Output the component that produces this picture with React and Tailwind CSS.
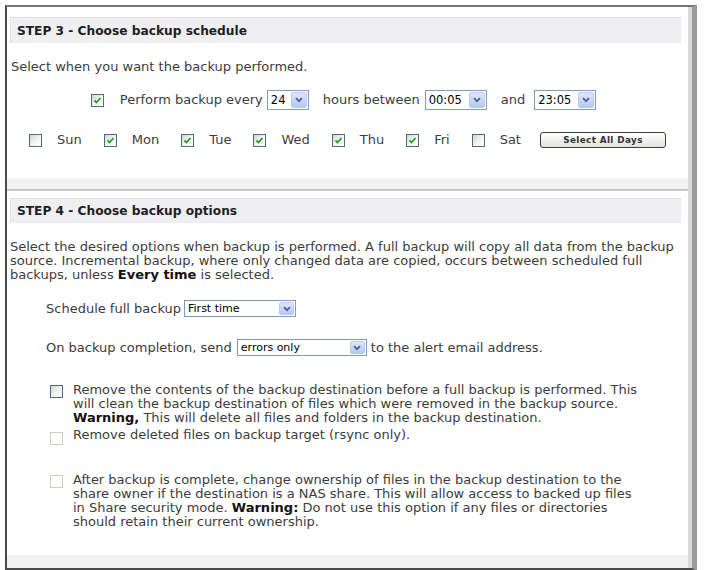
import React from 'react'

function Check({ checked, disabled }) {
  if (disabled) {
    return <span className="block w-[13px] h-[13px] flex-shrink-0 border border-[#cfcdc4] bg-white" />
  }
  return (
    <span className="flex w-[13px] h-[13px] flex-shrink-0 items-center justify-center border border-[#4e6a8a] bg-gradient-to-br from-[#d6d6d0] via-[#f2f2ee] to-white">
      {checked && (
        <svg width="9" height="9" viewBox="0 0 9 9">
          <path d="M1.5 4.5 L3.5 6.5 L7.5 2" fill="none" stroke="#21a121" strokeWidth="1.8" />
        </svg>
      )}
    </span>
  )
}

function Select({ value, width, big }) {
  return (
    <span className={`flex items-stretch border border-[#7f9db9] bg-white ${width} ${big ? 'h-[20px]' : 'h-[17px]'}`}>
      <span className={`flex-1 flex items-center pl-[3px] text-black ${big ? 'text-[11.5px]' : 'text-[11px]'}`}>
        {value}
      </span>
      <span className={`m-px flex items-center justify-center rounded-[2px] border border-[#b9cbf5] bg-gradient-to-b from-[#dde7fe] to-[#b4c8f6] ${big ? 'w-[16px]' : 'w-[15px]'}`}>
        <svg width="8" height="6" viewBox="0 0 8 6">
          <path d="M1 1.2 L4 4.2 L7 1.2" fill="none" stroke="#4d6185" strokeWidth="1.8" />
        </svg>
      </span>
    </span>
  )
}

export default function App() {
  const days = [
    { d: 'Sun', on: false },
    { d: 'Mon', on: true },
    { d: 'Tue', on: true },
    { d: 'Wed', on: true },
    { d: 'Thu', on: true },
    { d: 'Fri', on: true },
    { d: 'Sat', on: false },
  ]

  return (
    <div className="w-[704px] h-[570px] bg-white pt-[5px] pl-[5px] font-['DejaVu_Sans',Verdana,sans-serif] text-[13px] leading-[14px] text-[#3c3c3c]">
      <div className="w-[692px] border-l-2 border-t-2 border-b-[3px] border-r-[5px] border-l-[#4a4a4a] border-t-[#777] border-b-[#4a4a4a] border-r-[#9c9c9c]">
        <div className="flex flex-col border-r-4 border-r-[#dadada]">

          {/* STEP 3 */}
          <div className="ml-[3px] mr-[7px] mt-[10px] h-[26px] flex items-center pl-[6px] bg-[#efeff2] border-t border-l border-[#e2e2e6] font-bold text-[12.2px] text-[#1e1e1e]">
            STEP 3 - Choose backup schedule
          </div>
          <div className="mt-[17px] pl-[4px]">Select when you want the backup performed.</div>

          <div className="mt-[16px] h-[20px] pr-[8px] flex items-center justify-center">
            <Check checked />
            <span className="ml-[16px]">Perform backup every</span>
            <span className="ml-[4px]"><Select value="24" width="w-[42px]" big /></span>
            <span className="ml-[14px]">hours between</span>
            <span className="ml-[5px]"><Select value="00:05" width="w-[62px]" big /></span>
            <span className="ml-[14px]">and</span>
            <span className="ml-[9px]"><Select value="23:05" width="w-[62px]" big /></span>
          </div>

          <div className="mt-[22px] h-[16px] flex items-center justify-center gap-[22px]">
            {days.map(x => (
              <span key={x.d} className="flex items-center">
                <Check checked={x.on} />
                <span className="ml-[15px]">{x.d}</span>
              </span>
            ))}
            <button className="ml-[-3px] w-[126px] h-[16px] rounded-[3px] border border-[#3c3c3c] bg-gradient-to-b from-white to-[#e2e2dc] text-[8.8px] font-bold tracking-[0.4px] text-[#333] leading-none">
              Select All Days
            </button>
          </div>

          <div className="mt-[30px] h-[11px] bg-[#f2f2f2]" />
          <div className="h-[2px] bg-[#c6c6c6]" />

          {/* STEP 4 */}
          <div className="ml-[3px] mr-[7px] mt-[7px] h-[25px] flex items-center pl-[6px] bg-[#efeff2] border-t border-l border-[#e2e2e6] font-bold text-[12.2px] text-[#1e1e1e]">
            STEP 4 - Choose backup options
          </div>
          <div className="mt-[17px] pl-[3px] whitespace-nowrap">
            <div>Select the desired options when backup is performed. A full backup will copy all data from the backup</div>
            <div>source. Incremental backup, where only changed data are copied, occurs between scheduled full</div>
            <div>backups, unless <b className="text-[#111]">Every time</b> is selected.</div>
          </div>

          <div className="mt-[18px] h-[17px] pl-[39px] flex items-center">
            <span>Schedule full backup</span>
            <span className="ml-[3px]"><Select value="First time" width="w-[112px]" /></span>
          </div>

          <div className="mt-[22px] h-[17px] pl-[39px] flex items-center">
            <span>On backup completion, send</span>
            <span className="ml-[5px]"><Select value="errors only" width="w-[130px]" /></span>
            <span className="ml-[4px]">to the alert email address.</span>
          </div>

          <div className="mt-[27px] pl-[43px] flex items-start whitespace-nowrap">
            <span className="mt-[2px]"><Check /></span>
            <div className="ml-[10px]">
              <div>Remove the contents of the backup destination before a full backup is performed. This</div>
              <div>will clean the backup destination of files which were removed in the backup source.</div>
              <div><b className="text-[#111]">Warning,</b> This will delete all files and folders in the backup destination.</div>
            </div>
          </div>

          <div className="mt-[3px] pl-[43px] flex items-start whitespace-nowrap">
            <span className="mt-[4px]"><Check disabled /></span>
            <div className="ml-[10px]">Remove deleted files on backup target (rsync only).</div>
          </div>

          <div className="mt-[28px] pl-[43px] flex items-start whitespace-nowrap">
            <span className="mt-[2px]"><Check disabled /></span>
            <div className="ml-[10px]">
              <div>After backup is complete, change ownership of files in the backup destination to the</div>
              <div>share owner if the destination is a NAS share. This will allow access to backed up files</div>
              <div>in Share security mode. <b className="text-[#111]">Warning:</b> Do not use this option if any files or directories</div>
              <div>should retain their current ownership.</div>
            </div>
          </div>

          <div className="mt-[26px] h-[13px] bg-[#f2f2f2]" />
        </div>
      </div>
    </div>
  )
}
